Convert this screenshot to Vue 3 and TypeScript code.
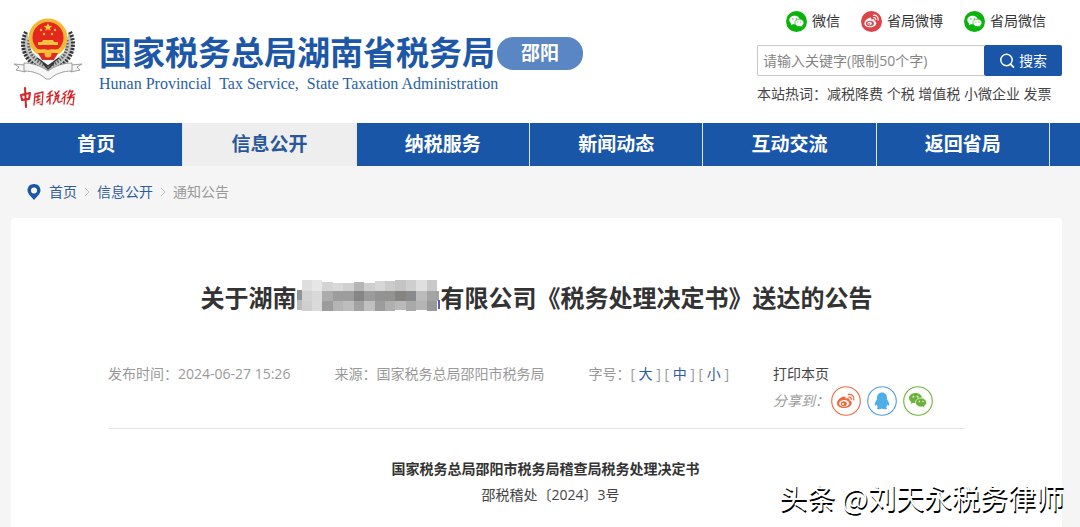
<script setup lang="ts">
import { ref } from 'vue'

interface Mosaic {
  x: number
  y: number
  w: number
  h: number
  c: string
}

const keyword = ref('')
const navItems = ['首页', '信息公开', '纳税服务', '新闻动态', '互动交流', '返回省局']
const activeItem = ref('信息公开')
const socials = [
  { kind: 'wechat', label: '微信', color: '#0bb20c' },
  { kind: 'weibo', label: '省局微博', color: '#dd4449' },
  { kind: 'wechat', label: '省局微信', color: '#0bb20c' },
]
const hotWords = ['减税降费', '个税', '增值税', '小微企业', '发票']
const sizes = ['大', '中', '小']
const shares = [
  { kind: 'weibo', label: '分享到微博', color: '#f0673c' },
  { kind: 'qq', label: '分享到QQ', color: '#4b9fdc' },
  { kind: 'wechat', label: '分享到微信', color: '#6db339' },
]

const mosaic: Mosaic[] = [
  { x: 0, y: 10, w: 5, h: 10, c: '#8e9395' },
  { x: 0, y: 20, w: 5, h: 10, c: '#bcbcbd' },
  { x: 5, y: 0, w: 10, h: 11, c: '#dedede' },
  { x: 15, y: 0, w: 10, h: 11, c: '#e6e6e6' },
  { x: 25, y: 2, w: 11, h: 9, c: '#d4d4d4' },
  { x: 36, y: 3, w: 10, h: 8, c: '#d9d9d9' },
  { x: 46, y: 3, w: 11, h: 8, c: '#d0d0d0' },
  { x: 57, y: 2, w: 10, h: 9, c: '#b5b5b5' },
  { x: 67, y: 3, w: 11, h: 8, c: '#cecece' },
  { x: 78, y: 1, w: 10, h: 10, c: '#d6d6d6' },
  { x: 88, y: 1, w: 10, h: 10, c: '#cbcbcb' },
  { x: 98, y: 0, w: 11, h: 11, c: '#c4c4c4' },
  { x: 109, y: 0, w: 10, h: 11, c: '#cecece' },
  { x: 119, y: 0, w: 11, h: 11, c: '#dfdfdf' },
  { x: 130, y: 0, w: 10, h: 11, c: '#c9c9c9' },
  { x: 5, y: 11, w: 10, h: 10, c: '#d2d2d2' },
  { x: 15, y: 11, w: 10, h: 10, c: '#d9d9d9' },
  { x: 25, y: 11, w: 11, h: 10, c: '#acacac' },
  { x: 36, y: 11, w: 21, h: 10, c: '#9d9d9d' },
  { x: 57, y: 11, w: 10, h: 10, c: '#858585' },
  { x: 67, y: 11, w: 11, h: 10, c: '#9b9b9b' },
  { x: 78, y: 11, w: 20, h: 10, c: '#939393' },
  { x: 98, y: 11, w: 11, h: 10, c: '#858481' },
  { x: 109, y: 11, w: 10, h: 10, c: '#888a8c' },
  { x: 119, y: 11, w: 11, h: 10, c: '#bbbbbb' },
  { x: 130, y: 11, w: 12, h: 10, c: '#a4a4a4' },
  { x: 5, y: 21, w: 10, h: 10, c: '#cfcfcf' },
  { x: 15, y: 21, w: 10, h: 10, c: '#dadada' },
  { x: 25, y: 21, w: 11, h: 10, c: '#9c9c9c' },
  { x: 36, y: 21, w: 10, h: 10, c: '#b5b5b5' },
  { x: 46, y: 21, w: 11, h: 10, c: '#bdbdbd' },
  { x: 57, y: 21, w: 10, h: 10, c: '#a2a2a2' },
  { x: 67, y: 21, w: 11, h: 10, c: '#c0c0c0' },
  { x: 78, y: 21, w: 10, h: 10, c: '#9c9c9c' },
  { x: 88, y: 21, w: 10, h: 10, c: '#b0b0b0' },
  { x: 98, y: 21, w: 11, h: 9, c: '#b9b9b9' },
  { x: 109, y: 21, w: 10, h: 10, c: '#a9a9a9' },
  { x: 119, y: 21, w: 11, h: 9, c: '#b4b4b4' },
  { x: 130, y: 21, w: 10, h: 10, c: '#999999' },
  { x: 141, y: 20, w: 2, h: 9, c: '#6158b8' },
]
</script>

<template>
  <div class="page">
    <header class="header">
      <div class="brand">
        <div class="emblem">
          <svg class="emblem-art" viewBox="0 0 68 62" aria-hidden="true">
            <path d="M13 13C3 28 10 48 34 56C58 48 65 28 55 13L50 34 34 48 18 34z" fill="#c3c4c4" />
            <g fill="none" stroke="#2f3236" stroke-width="4" stroke-dasharray="2 1.300">
              <path d="M12 14C5 28 10 45 32 54" />
              <path d="M56 14C63 28 58 45 36 54" />
            </g>
            <g fill="none" stroke="#5c5f62" stroke-width="3" stroke-dasharray="1.500 1.500">
              <path d="M15 22C13 34 20 43 33 49" />
              <path d="M53 22C55 34 48 43 35 49" />
            </g>
            <path d="M23 40l11 8 11-8M29 45l5 6 6-6" fill="none" stroke="#333" stroke-width="1.500" />
            <circle cx="34" cy="20" r="19.500" fill="#f6b737" />
            <circle cx="34" cy="19.500" r="15.500" fill="#e4281d" />
            <path d="M34 5l1.200 2.700 3 .2-2.300 2 .7 2.800L34 11.200l-2.600 1.500.7-2.800-2.300-2 3-.2z" fill="#ffc938" />
            <g fill="#fbc33c">
              <circle cx="27" cy="12" r="1.200" /><circle cx="41" cy="12" r="1.200" />
              <circle cx="30" cy="16" r="1.200" /><circle cx="38" cy="16" r="1.200" />
              <path d="M29 22h10l1 2h4v3H24v-3h4z" />
              <path d="M22 30c4 3 8 0 12 2 4-2 8 1 12-2l1 4c-5 3-9 0-13 1-4-1-8 2-13-1z" />
            </g>
            <path d="M24 35h20l-4 7H28z" fill="#dc2c21" />
            <circle cx="34" cy="36" r="3.500" fill="#f9b63b" />
            <g fill="#f5f5f4" stroke="#85888a" stroke-width=".8">
              <path d="M0 46l11 1v7L2 52l3-3z" />
              <path d="M68 46l-11 1v7l9-2-3-3z" />
              <path d="M10 45c9 0 17 3 24 8 7-5 15-8 24-8v8c-9 0-17 3-22 8h-4c-5-5-13-8-22-8z" />
            </g>
          </svg>
          <svg class="emblem-script" viewBox="0 0 58 24" aria-hidden="true">
            <g fill="none" stroke="#d3262c" stroke-width="1.700" stroke-linecap="round" stroke-linejoin="round">
              <path d="M2 9l1 5M2 9l9-2-1 6-7 1M6 2l1 19" stroke-width="2" />
              <path d="M16 8l-1 11M16 8l8-2-1 13-2-1M17 11l4-1M19 9v6M17 15l4-2M18 17l3-1" stroke-width="1.300" />
              <path d="M33 5l-4 3M28 11l6-2M31 6v12M31 12l-3 4M36 6l1 2M40 5l-3 4M36 11l4-2-1 3-3 1M37 13l-3 5M39 12c-1 5 1 5 4 3" stroke-width="1.400" />
              <path d="M48 5l-4 3 3 1-4 4M46 10l-1 8M51 4l-2 5M50 6l4-1-3 5M48 12l8-4M50 12l5-1-1 8-3-1M53 9l-5 9" stroke-width="1.300" />
            </g>
          </svg>
        </div>
        <div class="names">
          <div class="name-row">
            <span class="name">国家税务总局湖南省税务局</span>
            <span class="city">邵阳</span>
          </div>
          <div class="name-en">Hunan Provincial&nbsp; Tax Service,&nbsp; State Taxation Administration</div>
        </div>
      </div>

      <div class="tools">
        <div class="socials">
          <a v-for="s in socials" :key="s.label" href="#" class="social">
            <svg class="social-icon" viewBox="0 0 22 22" aria-hidden="true">
              <circle cx="11" cy="11" r="11" :fill="s.color" />
              <g v-if="s.kind === 'wechat'">
                <path d="M9 5C5.800 5 3.500 7 3.500 9.500c0 1.500.8 2.700 2 3.500L5 15l2.200-1.200c.6.2 1.200.2 1.800.2 3 0 5.500-2 5.500-4.500S12 5 9 5z" fill="#fff" />
                <path d="M14 8.500c-2.700 0-4.700 1.700-4.700 3.900s2 3.900 4.700 3.900c.5 0 1-.1 1.500-.2l1.900 1-.5-1.700c1.100-.7 1.800-1.800 1.800-3 0-2.200-2.100-3.900-4.700-3.900z" fill="#fff" :stroke="s.color" stroke-width=".7" />
                <g :fill="s.color"><circle cx="7.200" cy="8.300" r=".7" /><circle cx="10.800" cy="8.300" r=".7" /><circle cx="12.500" cy="11.500" r=".6" /><circle cx="15.600" cy="11.500" r=".6" /></g>
              </g>
              <g v-else>
                <path d="M9 7c-3 1-5.500 3.500-5.500 6 0 2.200 2.700 4 6 4 4 0 6.500-2 6.500-4.200 0-1.300-.9-1.900-1.900-2.200.5-1.500-.6-2.600-3.400-1.600C11 7.500 10.500 6.600 9 7z" fill="#fff" />
                <ellipse cx="9.300" cy="13" rx="4.200" ry="2.900" :fill="s.color" />
                <ellipse cx="9" cy="13.200" rx="2.300" ry="1.900" fill="#fff" />
                <circle cx="8.500" cy="13.500" r=".9" :fill="s.color" />
                <path d="M13 4.500c3-.6 5.500 1.700 4.900 5M13.400 7c1.400-.2 2.300.8 2 2.100" fill="none" stroke="#fff" stroke-width="1.200" stroke-linecap="round" />
              </g>
            </svg>
            <span>{{ s.label }}</span>
          </a>
        </div>
        <form class="search" @submit.prevent>
          <input v-model="keyword" class="search-input" type="text" maxlength="50" aria-label="关键字" placeholder="请输入关键字(限制50个字)" />
          <button class="search-button" type="submit">
            <svg class="search-icon" viewBox="0 0 16 16" aria-hidden="true">
              <circle cx="7.500" cy="7" r="5.700" fill="none" stroke="#fff" stroke-width="1.500" />
              <path d="M11.500 11.200l3 3" stroke="#fff" stroke-width="1.700" stroke-linecap="round" />
            </svg>
            搜索
          </button>
        </form>
        <div class="hot">
          <span>本站热词：</span>
          <template v-for="w in hotWords" :key="w"><a href="#">{{ w }}</a>{{ ' ' }}</template>
        </div>
      </div>
    </header>

    <nav class="nav">
      <a v-for="item in navItems" :key="item" href="#" class="nav-item" :class="{ active: item === activeItem }" @click.prevent="activeItem = item">{{ item }}</a>
    </nav>

    <div class="crumbs">
      <svg class="pin" viewBox="0 0 14 16" aria-hidden="true">
        <path d="M7 0C3 0 .5 2.900.5 6.300.5 10 4 12.500 7 16c3-3.500 6.500-6 6.500-9.700C13.500 2.900 11 0 7 0z" fill="#1b57a8" />
        <circle cx="7" cy="6.500" r="3" fill="#fff" />
      </svg>
      <a href="#">首页</a>
      <svg class="chevron" viewBox="0 0 6 10" aria-hidden="true"><path d="M1 1l4 4-4 4" /></svg>
      <a href="#">信息公开</a>
      <svg class="chevron" viewBox="0 0 6 10" aria-hidden="true"><path d="M1 1l4 4-4 4" /></svg>
      <span>通知公告</span>
    </div>

    <main class="card">
      <h1 class="title">
        <span>关于湖南</span>
        <svg class="mosaic" viewBox="0 0 144 36" aria-hidden="true" shape-rendering="crispEdges">
          <rect v-for="(m, i) in mosaic" :key="i" :x="m.x" :y="m.y" :width="m.w" :height="m.h" :fill="m.c" />
        </svg>
        <span>有限公司《税务处理决定书》送达的公告</span>
      </h1>

      <div class="meta">
        <span>发布时间：2024-06-27 15:26</span>
        <span>来源：国家税务总局邵阳市税务局</span>
        <span class="sizes">字号：<template v-for="s in sizes" :key="s">[ <a href="#">{{ s }}</a> ] </template></span>
        <div class="actions">
          <a href="#" class="print">打印本页</a>
          <div class="share">
            <span class="share-label">分享到：</span>
            <button v-for="s in shares" :key="s.kind" class="share-button" type="button" :aria-label="s.label">
              <svg viewBox="0 0 30 30" aria-hidden="true">
                <circle cx="15" cy="15" r="14.300" fill="#fff" :stroke="s.color" stroke-width="1.100" />
                <g v-if="s.kind === 'weibo'">
                  <path d="M12.500 10.500C9 11.500 6 14.500 6 17.500c0 2.700 3.300 4.500 7.200 4.500 4.600 0 7.500-2.400 7.500-5 0-1.500-1-2.200-2.200-2.500.5-1.900-.8-3-4-1.900.5-1.600-.4-2.500-2-2.100z" :fill="s.color" />
                  <ellipse cx="13.200" cy="17.400" rx="5" ry="3.400" fill="#fff" />
                  <ellipse cx="12.800" cy="17.700" rx="3" ry="2.500" :fill="s.color" />
                  <circle cx="12" cy="18.100" r="1.100" fill="#fff" />
                  <path d="M17.500 8.500c3.500-.7 6 1.900 5.300 5.400M18 11.200c1.600-.2 2.500.8 2.200 2.200" fill="none" :stroke="s.color" stroke-width="1.300" stroke-linecap="round" />
                </g>
                <path
                  v-else-if="s.kind === 'qq'"
                  d="M15 6.500c-3.200 0-5 2.300-5 5.200v1.500c-1.600 2.200-2.600 4.500-2.100 6.300.3.700 1.100 0 1.700-.9.200 1 .7 1.900 1.400 2.600-.8.300-1.300.8-1.100 1.300.4 1 3.600.9 5.100.1 1.500.8 4.700.9 5.100-.1.200-.5-.3-1-1.100-1.300.7-.7 1.200-1.600 1.400-2.600.6.9 1.400 1.600 1.700.9.500-1.800-.5-4.100-2.100-6.300v-1.500c0-2.900-1.800-5.200-5-5.200z"
                  fill="#4eaee9"
                />
                <g v-else>
                  <path d="M12.500 7C8.900 7 6 9.200 6 12c0 1.600.9 3 2.300 3.900L7.700 18l2.500-1.300c.7.200 1.500.3 2.300.3 3.600 0 6.500-2.200 6.500-5s-2.900-5-6.500-5z" :fill="s.color" />
                  <path d="M18.100 12c-3.200 0-5.600 2-5.600 4.500s2.400 4.500 5.600 4.500c.6 0 1.200-.1 1.700-.2l2.200 1.200-.6-2c1.300-.8 2.200-2.100 2.200-3.500 0-2.500-2.400-4.500-5.500-4.500z" :fill="s.color" stroke="#fff" stroke-width=".7" />
                  <g fill="#fff"><circle cx="10.400" cy="10.700" r=".9" /><circle cx="14.600" cy="10.700" r=".9" /><circle cx="16.400" cy="15.500" r=".7" /><circle cx="20" cy="15.500" r=".7" /></g>
                </g>
              </svg>
            </button>
          </div>
        </div>
      </div>

      <article class="article">
        <p class="doc-name">国家税务总局邵阳市税务局稽查局税务处理决定书</p>
        <p class="doc-number">邵税稽处〔2024〕3号</p>
      </article>
    </main>

    <div class="watermark">头条 @刘天永税务律师</div>
  </div>
</template>

<style>
body {
  margin: 0;
  background: #f5f5f5;
}
</style>

<style scoped>
.page {
  position: relative;
  display: flex;
  flex-direction: column;
  min-height: 100vh;
  background: #f5f5f5;
  color: #444;
  font: 14px/20px "Open Sans", "Noto Sans CJK SC", sans-serif;
}
a {
  color: inherit;
  text-decoration: none;
}
.header {
  display: flex;
  justify-content: space-between;
  box-sizing: border-box;
  height: 123px;
  padding: 10px 18px 0 14px;
  background: #fff;
}
.brand {
  display: flex;
  gap: 17px;
  padding-top: 8px;
}
.emblem {
  display: flex;
  flex-direction: column;
  align-items: center;
  width: 68px;
}
.emblem-art {
  width: 68px;
  height: 62px;
}
.emblem-script {
  width: 58px;
  height: 24px;
  margin-top: 6px;
}
.names {
  padding-top: 15px;
}
.name-row {
  display: flex;
  align-items: center;
  gap: 2px;
  height: 40px;
}
.name {
  color: #1d57a7;
  font-size: 33px;
  font-weight: 700;
  line-height: 40px;
}
.city {
  width: 86px;
  border-radius: 16px;
  background: #5b86c4;
  color: #fff;
  font-size: 19px;
  font-weight: 700;
  line-height: 33px;
  text-align: center;
}
.name-en {
  color: #2a5fa8;
  font: 16px/22px "Liberation Serif", serif;
}
.tools {
  width: 305px;
}
.socials {
  display: flex;
  gap: 21px;
  padding-left: 29px;
}
.social {
  display: flex;
  align-items: center;
  gap: 5px;
  color: #333;
  line-height: 22px;
}
.social-icon {
  width: 21px;
  height: 21px;
}
.search {
  display: flex;
  height: 31px;
  margin-top: 13px;
}
.search-input {
  flex: 1;
  box-sizing: border-box;
  min-width: 0;
  padding: 0 5px;
  border: 1px solid #c9c9c9;
  border-right: 0;
  border-radius: 2px 0 0 2px;
  outline: 0;
  color: #333;
  font: inherit;
}
.search-input::placeholder {
  color: #858585;
  opacity: 1;
}
.search-button {
  display: flex;
  align-items: center;
  justify-content: center;
  gap: 4px;
  width: 78px;
  padding: 0;
  border: 0;
  border-radius: 2px;
  background: #1a56a8;
  color: #fff;
  font: inherit;
}
.search-icon {
  width: 16px;
  height: 16px;
}
.hot {
  margin-top: 8px;
  white-space: nowrap;
}
.nav {
  display: flex;
  padding: 0 30px 0 10px;
  background: #1a56a8;
}
.nav-item {
  flex: 1;
  border-right: 1px solid #dfe7f2;
  color: #fff;
  font-size: 19px;
  font-weight: 700;
  line-height: 43px;
  text-align: center;
}
.nav-item.active {
  background: #eee;
  color: #2a5799;
}
.crumbs {
  display: flex;
  align-items: center;
  height: 52px;
  padding-left: 27px;
  color: #999;
}
.crumbs a {
  color: #2f5c9d;
}
.pin {
  width: 14px;
  height: 16px;
  margin-right: 8px;
}
.chevron {
  width: 6px;
  height: 10px;
  margin: 0 7px;
  fill: none;
  stroke: #bbb;
}
.card {
  flex: 1;
  margin: 0 18px 0 11px;
  padding: 61px 97px 0;
  border-radius: 4px 4px 0 0;
  background: #fff;
}
.title {
  display: flex;
  align-items: center;
  justify-content: center;
  margin: 0;
  color: #333;
  font-size: 24px;
  font-weight: 700;
  line-height: 38px;
  white-space: nowrap;
}
.mosaic {
  width: 144px;
  height: 36px;
}
.meta {
  display: flex;
  align-items: flex-start;
  gap: 44px;
  margin-top: 47px;
  padding-bottom: 12px;
  border-bottom: 1px solid #e6e6e6;
  color: #999;
  white-space: nowrap;
}
.sizes a {
  color: #2f5c9d;
}
.print {
  display: block;
}
.share {
  display: flex;
  align-items: center;
  gap: 6px;
  height: 30px;
  margin-top: 2px;
}
.share-label {
  width: 52px;
  font-style: italic;
}
.print {
  color: #444;
}
.share-button {
  width: 30px;
  height: 30px;
  padding: 0;
  border: 0;
  background: none;
}
.share-button svg {
  display: block;
}
.article {
  padding-top: 27px;
  text-align: center;
}
.article p {
  margin: 0;
  line-height: 26px;
}
.doc-name {
  color: #333;
  text-indent: 18px;
  font-weight: 700;
}
.doc-number {
  text-indent: 28px;
}
.watermark {
  position: absolute;
  right: 16px;
  bottom: 12px;
  color: #fff;
  font: 28px/36px "Noto Sans CJK SC", sans-serif;
  text-shadow: 1px 2px 0 #000;
}
</style>
